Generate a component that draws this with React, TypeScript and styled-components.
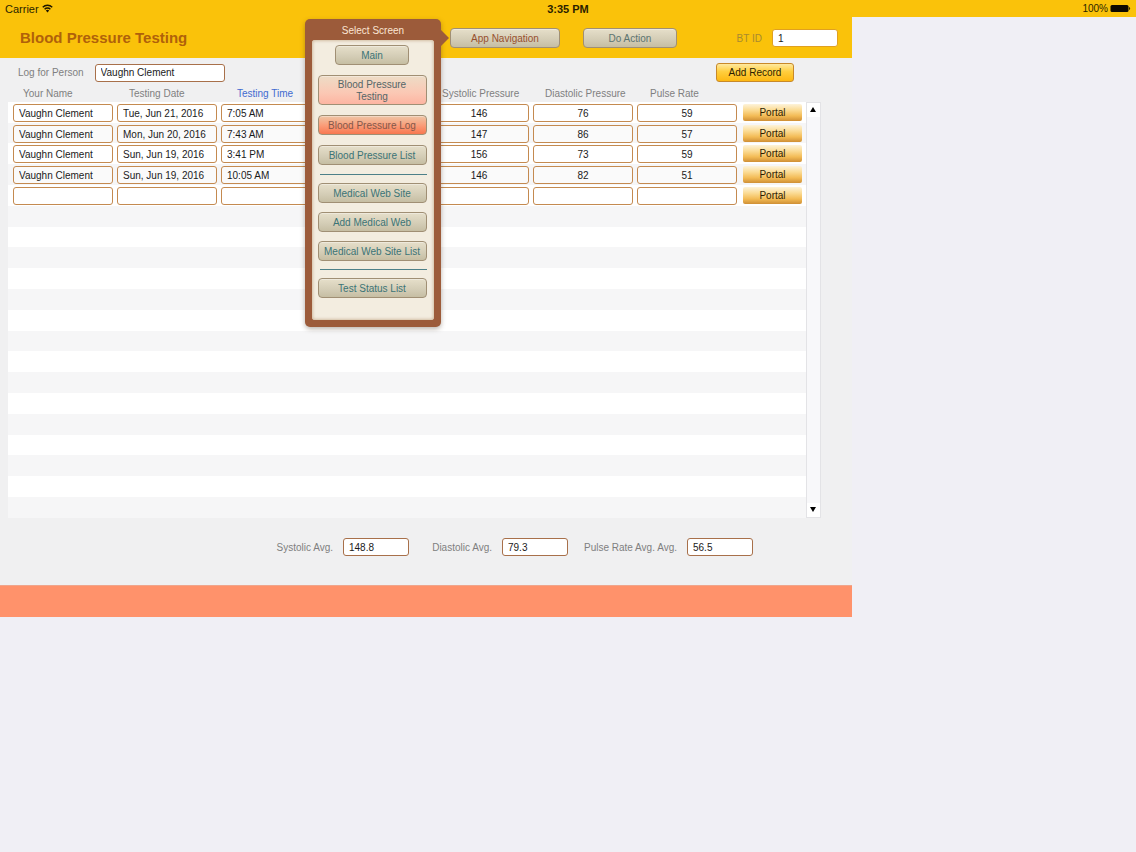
import React from "react";
import styled, { createGlobalStyle } from "styled-components";

const GlobalStyle = createGlobalStyle`
  *, *::before, *::after { box-sizing: border-box; }
  body {
    margin: 0;
    background: #f0eff5;
    font-family: "Liberation Sans", Arial, sans-serif;
    font-size: 10px;
    line-height: 12px;
    color: #1a1a1a;
  }
  button, input { font: inherit; color: inherit; margin: 0; }
`;

const gold = "#fac20a";

const StatusBar = styled.header`
  display: grid;
  grid-template-columns: 1fr auto 1fr;
  align-items: center;
  height: 17px;
  padding: 0 5px;
  background: ${gold};
  color: #2b1f00;
  font-size: 11px;
`;

const StatusLeft = styled.span`
  display: flex;
  align-items: center;
  gap: 3px;
`;

const StatusRight = styled.span`
  display: flex;
  align-items: center;
  justify-content: flex-end;
  gap: 2px;
  font-size: 10px;
`;

const Layout = styled.main`
  width: 75%;
  min-width: 800px;
  background: #f0f0f1;
`;

const TitleBar = styled.div`
  display: flex;
  align-items: center;
  height: 41px;
  padding: 1px 14px 0 20px;
  background: ${gold};
`;

const Title = styled.h1`
  flex: 0 0 430px;
  margin: 0;
  font-size: 15px;
  line-height: 18px;
  color: #b0610a;
`;

const NavAnchor = styled.div`
  position: relative;
  margin-right: 23px;
`;

type Tone = "stone" | "blush" | "coral";

const toneFill: Record<Tone, string> = {
  stone: "linear-gradient(#e6dfca, #d3ccb5 60%, #c6bea3)",
  blush: "linear-gradient(#eddcc6, #fbc8b4 60%, #fdb5a2)",
  coral: "linear-gradient(#eec6a6, #fb9a76 55%, #f87850)",
};

const SoftButton = styled.button<{ $width: number; $tone?: Tone; $ink?: string; $tall?: boolean }>`
  display: block;
  width: ${(p) => p.$width}px;
  height: ${(p) => (p.$tall ? 30 : 20)}px;
  padding: ${(p) => (p.$tall ? "2px 12px 0" : "2px 2px 0")};
  border: 1px solid #a08f74;
  border-radius: 4px;
  background: ${(p) => toneFill[p.$tone ?? "stone"]};
  box-shadow: inset 0 1px 0 rgba(255, 255, 255, 0.35);
  color: ${(p) => p.$ink ?? "#3b7476"};
  white-space: ${(p) => (p.$tall ? "normal" : "nowrap")};
`;

const Popover = styled.nav`
  position: absolute;
  z-index: 2;
  top: -9px;
  right: calc(100% + 9px);
  width: 136px;
  padding: 0 7px 7px;
  border-radius: 5px;
  background: #9c5b3a;
  box-shadow: 0 2px 5px rgba(60, 40, 20, 0.35);

  &::after {
    content: "";
    position: absolute;
    top: 11px;
    left: 100%;
    border: 8px solid transparent;
    border-right-width: 0;
    border-left-color: #9c5b3a;
  }
`;

const PopoverTitle = styled.h2`
  height: 21px;
  margin: 0;
  padding-top: 1px;
  font-size: 10px;
  font-weight: normal;
  line-height: 21px;
  text-align: center;
  color: #fbe6d4;
`;

const PopoverBody = styled.div`
  height: 280px;
  border-radius: 3px;
  background: #f3ede0;
  box-shadow: inset 0 0 3px 1px #d3bfa5;
`;

const NavGroup = styled.div<{ $first?: boolean }>`
  display: flex;
  flex-direction: column;
  align-items: center;
  gap: ${(p) => (p.$first ? 10 : 9)}px;
  padding: ${(p) => (p.$first ? "5px 2px 9px 0" : "8px 2px 8px 0")};
`;

const Divider = styled.hr`
  margin: 0 7px 0 8px;
  border: 0;
  height: 1px;
  background: #4d8088;
`;

const IdField = styled.div`
  display: flex;
  align-items: center;
  gap: 10px;
  margin-left: auto;
`;

const Label = styled.label<{ $color?: string }>`
  padding-top: 1px;
  color: ${(p) => p.$color ?? "#7f7f80"};
  white-space: nowrap;
`;

const TextBox = styled.input<{ $width?: number; $center?: boolean; $edge?: string }>`
  display: block;
  width: ${(p) => (p.$width ? `${p.$width}px` : "100%")};
  height: 18px;
  padding: 0 5px;
  border: 1px solid ${(p) => p.$edge ?? "#c48a50"};
  border-radius: 3px;
  background: #fff;
  text-align: ${(p) => (p.$center ? "center" : "left")};
  outline: none;
`;

const FilterRow = styled.div`
  display: flex;
  align-items: center;
  gap: 11px;
  height: 26px;
  padding: 3px 58px 0 18px;
`;

const AddButton = styled.button`
  width: 78px;
  height: 19px;
  margin-left: auto;
  padding: 1px 0 0;
  border: 1px solid #c8892a;
  border-radius: 3px;
  background: linear-gradient(#ffe9a0, #ffce3e 45%, #fdb813);
  color: #2d1c00;
`;

const Panel = styled.div`
  display: flex;
  margin: 0 31px 0 8px;
`;

const LogTable = styled.table`
  flex: 1;
  width: 100%;
  table-layout: fixed;
  border-collapse: collapse;
`;

const HeadCell = styled.th<{ $indent: number; $active?: boolean }>`
  height: 18px;
  padding: 2px 0 0 ${(p) => p.$indent}px;
  font-weight: normal;
  text-align: left;
  white-space: nowrap;
  color: ${(p) => (p.$active ? "#3f6bd0" : "#7f7f80")};
`;

const BodyRow = styled.tr`
  height: 21px;
  background: #fff;

  &:nth-child(5n + 2) { height: 20px; }
  &:nth-child(even) { background: #f6f6f7; }
  &:nth-child(even) input { background: #fafafa; }
`;

const Cell = styled.td<{ $first?: boolean }>`
  padding: 2px 2px 0 ${(p) => (p.$first ? 5 : 2)}px;
  vertical-align: top;

  &:last-child { padding: 2px 4px 0; }
`;

const PortalButton = styled.button`
  display: block;
  width: 100%;
  height: 17px;
  padding: 0;
  border: 0;
  border-radius: 2px;
  background: linear-gradient(#fdf3da, #fbdc96 35%, #f3bb55 70%, #cf8f35);
  color: #2d1c00;
`;

const ScrollColumn = styled.div`
  display: flex;
  flex-direction: column;
  justify-content: space-between;
  flex: 0 0 15px;
  margin-top: 18px;
  border: 1px solid #e3e3e6;
  background: #f8f8fa;
`;

const ScrollButton = styled.button`
  display: flex;
  align-items: center;
  justify-content: center;
  height: 14px;
  padding: 0 1px 1px 0;
  border: 0;
  background: #fff;
`;

const Averages = styled.div`
  display: grid;
  grid-template-columns: 78px 66px 93px 66px 119px 66px;
  align-items: center;
  align-content: start;
  height: 67px;
  padding: 20px 0 0 265px;

  label { padding-right: 10px; text-align: right; }
`;

const FooterBand = styled.footer`
  height: 32px;
  border-top: 1px solid #f0a58c;
  background: #ff926b;
`;

const records = [
  { date: "Tue, Jun 21, 2016", time: "7:05 AM", systolic: "146", diastolic: "76", pulse: "59" },
  { date: "Mon, Jun 20, 2016", time: "7:43 AM", systolic: "147", diastolic: "86", pulse: "57" },
  { date: "Sun, Jun 19, 2016", time: "3:41 PM", systolic: "156", diastolic: "73", pulse: "59" },
  { date: "Sun, Jun 19, 2016", time: "10:05 AM", systolic: "146", diastolic: "82", pulse: "51" },
  { date: "", time: "", systolic: "", diastolic: "", pulse: "" },
];

const columns = [
  { title: "Your Name", width: 107, indent: 15 },
  { title: "Testing Date", width: 104, indent: 14 },
  { title: "Testing Time", width: 208, indent: 18, active: true },
  { title: "Systolic Pressure", width: 104, indent: 15 },
  { title: "Diastolic Pressure", width: 104, indent: 14 },
  { title: "Pulse Rate", width: 104, indent: 15 },
  { title: "", width: 67, indent: 0 },
];

const averages = [
  { id: "avg-systolic", label: "Systolic Avg.", value: "148.8" },
  { id: "avg-diastolic", label: "Diastolic Avg.", value: "79.3" },
  { id: "avg-pulse", label: "Pulse Rate Avg. Avg.", value: "56.5" },
];

const TOTAL_ROWS = 20;

const WifiIcon = () => (
  <svg width="11" height="9" viewBox="0 0 22 18" fill="none" stroke="#1d1500" strokeWidth="2.8" aria-hidden="true">
    <path d="M1.5 6.5a13.4 13.4 0 0 1 19 0" />
    <path d="M5.2 10.4a8.2 8.2 0 0 1 11.6 0" />
    <path d="M11 16.8 7.6 13.2a4.8 4.8 0 0 1 6.8 0Z" fill="#1d1500" stroke="none" />
  </svg>
);

const BatteryIcon = () => (
  <svg width="21" height="9" viewBox="0 0 21 9" aria-hidden="true">
    <rect x="0.5" y="1" width="18" height="7" rx="1.5" fill="#0d0900" />
    <path d="M19.2 3v3a1.7 1.7 0 0 0 0-3Z" fill="#0d0900" />
  </svg>
);

const Triangle = ({ down }: { down?: boolean }) => (
  <svg width="6" height="5" viewBox="0 0 6 5" aria-hidden="true">
    <path d={down ? "M0 0h6L3 5Z" : "M0 5h6L3 0Z"} fill="#000" />
  </svg>
);

export default function App() {
  return (
    <>
      <GlobalStyle />
      <StatusBar>
        <StatusLeft>Carrier <WifiIcon /></StatusLeft>
        <strong>3:35 PM</strong>
        <StatusRight>100% <BatteryIcon /></StatusRight>
      </StatusBar>
      <Layout>
        <TitleBar>
          <Title>Blood Pressure Testing</Title>
          <NavAnchor>
            <SoftButton $width={110} $ink="#97502e">App Navigation</SoftButton>
            <Popover aria-label="Select Screen">
              <PopoverTitle>Select Screen</PopoverTitle>
              <PopoverBody>
                <NavGroup $first>
                  <SoftButton $width={74}>Main</SoftButton>
                  <SoftButton $width={109} $tone="blush" $ink="#556668" $tall>Blood Pressure Testing</SoftButton>
                  <SoftButton $width={109} $tone="coral" $ink="#84584a">Blood Pressure Log</SoftButton>
                  <SoftButton $width={109}>Blood Pressure List</SoftButton>
                </NavGroup>
                <Divider />
                <NavGroup>
                  <SoftButton $width={109}>Medical Web Site</SoftButton>
                  <SoftButton $width={109}>Add Medical Web</SoftButton>
                  <SoftButton $width={109}>Medical Web Site List</SoftButton>
                </NavGroup>
                <Divider />
                <NavGroup>
                  <SoftButton $width={109}>Test Status List</SoftButton>
                </NavGroup>
              </PopoverBody>
            </Popover>
          </NavAnchor>
          <SoftButton $width={94} $ink="#5c7470">Do Action</SoftButton>
          <IdField>
            <Label htmlFor="bt-id" $color="#a88a30">BT ID</Label>
            <TextBox id="bt-id" $width={66} $edge="#e0a020" defaultValue="1" />
          </IdField>
        </TitleBar>
        <FilterRow>
          <Label htmlFor="person">Log for Person</Label>
          <TextBox id="person" $width={130} $edge="#a8704a" defaultValue="Vaughn Clement" />
          <AddButton>Add Record</AddButton>
        </FilterRow>
        <Panel>
          <LogTable>
            <colgroup>
              {columns.map((c, i) => <col key={i} width={c.width} />)}
            </colgroup>
            <thead>
              <tr>
                {columns.map((c, i) => (
                  <HeadCell key={i} $indent={c.indent} $active={c.active}>{c.title}</HeadCell>
                ))}
              </tr>
            </thead>
            <tbody>
              {records.map((r, i) => (
                <BodyRow key={i}>
                  <Cell $first><TextBox aria-label="Your Name" defaultValue={r.date ? "Vaughn Clement" : ""} /></Cell>
                  <Cell><TextBox aria-label="Testing Date" defaultValue={r.date} /></Cell>
                  <Cell><TextBox aria-label="Testing Time" defaultValue={r.time} /></Cell>
                  <Cell><TextBox aria-label="Systolic Pressure" $center defaultValue={r.systolic} /></Cell>
                  <Cell><TextBox aria-label="Diastolic Pressure" $center defaultValue={r.diastolic} /></Cell>
                  <Cell><TextBox aria-label="Pulse Rate" $center defaultValue={r.pulse} /></Cell>
                  <Cell><PortalButton>Portal</PortalButton></Cell>
                </BodyRow>
              ))}
              {Array.from({ length: TOTAL_ROWS - records.length }, (_, i) => (
                <BodyRow key={`blank-${i}`}><Cell colSpan={columns.length} /></BodyRow>
              ))}
            </tbody>
          </LogTable>
          <ScrollColumn>
            <ScrollButton aria-label="Scroll up"><Triangle /></ScrollButton>
            <ScrollButton aria-label="Scroll down"><Triangle down /></ScrollButton>
          </ScrollColumn>
        </Panel>
        <Averages>
          {averages.map((a) => (
            <React.Fragment key={a.id}>
              <Label htmlFor={a.id}>{a.label}</Label>
              <TextBox id={a.id} $width={66} $edge="#a8704a" defaultValue={a.value} />
            </React.Fragment>
          ))}
        </Averages>
        <FooterBand />
      </Layout>
    </>
  );
}
